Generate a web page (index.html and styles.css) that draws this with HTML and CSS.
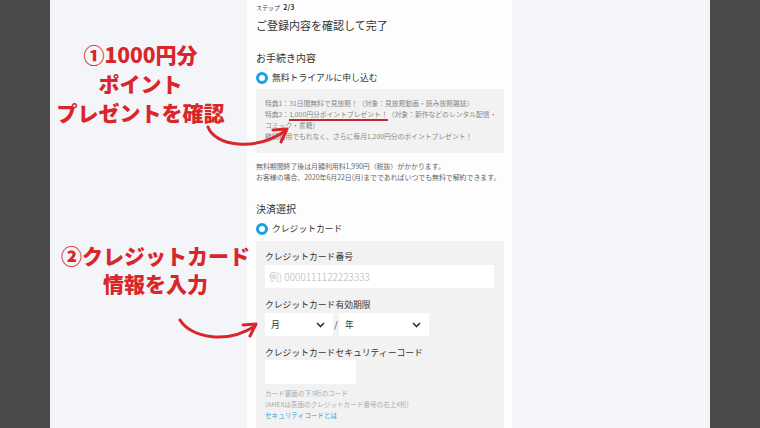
FILE: index.html
```
<!DOCTYPE html>
<html lang="ja">
<head>
    <meta charset="UTF-8">
    <meta name="viewport" content="width=device-width, initial-scale=1.0">
    <title>ご登録内容を確認して完了</title>
    <link rel="stylesheet" href="styles.css">
</head>
<body>
    <div class="frame">
        <!-- 登録フォーム -->
        <div class="sheet">
            <p class="step">ステップ <b>2/3</b></p>
            <h1 class="title">ご登録内容を確認して完了</h1>

            <h2 class="sec-head">お手続き内容</h2>
            <div class="radio-row"><span class="radio"></span>無料トライアルに申し込む</div>
            <div class="perk-box">
                <p>特典1：31日間無料で見放題！（対象：見放題動画・読み放題雑誌）</p>
                <p>特典2：<span class="marked">1,000円分ポイントプレゼント！</span>（対象：新作などのレンタル配信・<br>コミック・書籍）</p>
                <p>継続利用でもれなく、さらに毎月1,200円分のポイントプレゼント！</p>
            </div>
            <div class="note">
                <p>無料期間終了後は月額利用料1,990円（税抜）がかかります。</p>
                <p>お客様の場合、2020年6月22日(月)までであればいつでも無料で解約できます。</p>
            </div>

            <h2 class="sec-head pay-head">決済選択</h2>
            <div class="radio-row"><span class="radio"></span>クレジットカード</div>
            <div class="card-box">
                <label class="field-label">クレジットカード番号</label>
                <div class="input wide"><span class="placeholder">例) 0000111122223333</span></div>

                <label class="field-label">クレジットカード有効期限</label>
                <div class="expiry">
                    <div class="select month">
                        <span>月</span>
                        <svg width="9" height="6" viewBox="0 0 9 6"><path d="M1 1l3.5 3.5L8 1" fill="none" stroke="#333" stroke-width="1.6"/></svg>
                    </div>
                    <span class="slash">/</span>
                    <div class="select year">
                        <span>年</span>
                        <svg width="9" height="6" viewBox="0 0 9 6"><path d="M1 1l3.5 3.5L8 1" fill="none" stroke="#333" stroke-width="1.6"/></svg>
                    </div>
                </div>

                <label class="field-label">クレジットカードセキュリティーコード</label>
                <div class="input short"></div>
                <div class="hint">
                    <p>カード裏面の下3桁のコード</p>
                    <p>(AMEXは表面のクレジットカード番号の右上4桁)</p>
                    <p class="hint-link">セキュリティコードとは</p>
                </div>
            </div>
        </div>

        <!-- 注釈 -->
        <div class="callout callout-1">①1000円分<br>ポイント<br>プレゼントを確認</div>
        <div class="callout callout-2">②クレジットカード<br>情報を入力</div>
        <svg class="arrows" width="660" height="428" viewBox="0 0 660 428">
            <g fill="none" stroke="#d9262b" stroke-width="3" stroke-linecap="round" stroke-linejoin="round">
                <path d="M158 127 C165 146 205 152 235 131"/>
                <path d="M223 130 L237 129 L231 142"/>
                <path d="M130 320 C140 337 176 345 205 326"/>
                <path d="M193 325 L206 324 L200 336"/>
            </g>
        </svg>
    </div>
</body>
</html>
```

FILE: styles.css
```
body {
    margin: 0;
    background-color: #4b4b4b;
    font-family: "Noto Sans CJK JP", "Noto Sans", sans-serif;
    color: #333;
}
p, h1, h2 {
    margin: 0;
}
.frame {
    position: relative;
    margin-left: 50px;
    width: 660px;
    height: 428px;
    background: #f4f5f8;
    overflow: hidden;
}
.sheet {
    box-sizing: border-box;
    margin-left: 197px;
    width: 265px;
    height: 100%;
    padding: 0 8px 0 9px;
    background: #fdfdfe;
}
.step {
    font-size: 6px;
    line-height: 14px;
}
.step b {
    margin-left: 2px;
    font-size: 7px;
}
.title {
    margin-top: 3px;
    font-size: 11px;
    font-weight: normal;
    line-height: 14px;
}
.sec-head {
    margin-top: 19px;
    font-size: 10px;
    font-weight: normal;
    line-height: 14px;
}
.radio-row {
    display: flex;
    align-items: center;
    gap: 4px;
    margin-top: 6px;
    font-size: 8.8px;
    line-height: 14px;
}
.radio {
    box-sizing: border-box;
    width: 12px;
    height: 12px;
    border-radius: 50%;
    border: 3.5px solid #1a9fe3;
    background: #fff;
}
.perk-box {
    margin-top: 4px;
    padding: 9px 9px 11px;
    background: #f2f2f2;
    color: #888;
    font-size: 6.8px;
    line-height: 11px;
    white-space: nowrap;
}
.marked {
    border-bottom: 2px solid #c8262c;
}
.note {
    margin-top: 8px;
    color: #666;
    font-size: 6.9px;
    line-height: 11px;
    white-space: nowrap;
}
.card-box {
    margin-top: 5px;
    padding: 10px 10px 30px 9px;
    background: #f2f2f2;
}
.field-label {
    display: block;
    font-size: 8.8px;
    line-height: 12px;
    margin-top: 11px;
}
.field-label:first-child {
    margin-top: 0;
}
.input {
    box-sizing: border-box;
    margin-top: 2px;
    height: 23px;
    background: #fff;
    padding: 0 4px;
    display: flex;
    align-items: center;
}
.wide {
    width: 229px;
}
.short {
    width: 91px;
    height: 24px;
    margin-top: 1px;
}
.placeholder {
    font-size: 10px;
    font-weight: 300;
    color: #b5b5b5;
}
.expiry {
    display: flex;
    align-items: center;
    margin-top: 2px;
}
.select {
    box-sizing: border-box;
    height: 23px;
    background: #fff;
    display: flex;
    align-items: center;
    justify-content: space-between;
    padding: 0 8px 0 6px;
    font-size: 8.8px;
}
.month {
    width: 68px;
}
.year {
    width: 90px;
}
.slash {
    width: 6px;
    text-align: center;
    font-size: 8.8px;
}
.hint {
    margin-top: 4px;
    color: #aaa;
    font-size: 6.6px;
    line-height: 11px;
}
.hint-link {
    color: #2a9fe0;
}
.callout {
    position: absolute;
    text-align: center;
    color: #d9262b;
    font-weight: 900;
    font-size: 21px;
    white-space: nowrap;
}
.callout-1 {
    left: 0;
    top: 40px;
    width: 181px;
    line-height: 29px;
}
.callout-2 {
    left: 0;
    top: 241px;
    width: 211px;
    line-height: 28px;
}
.arrows {
    position: absolute;
    left: 0;
    top: 0;
    pointer-events: none;
}
```
